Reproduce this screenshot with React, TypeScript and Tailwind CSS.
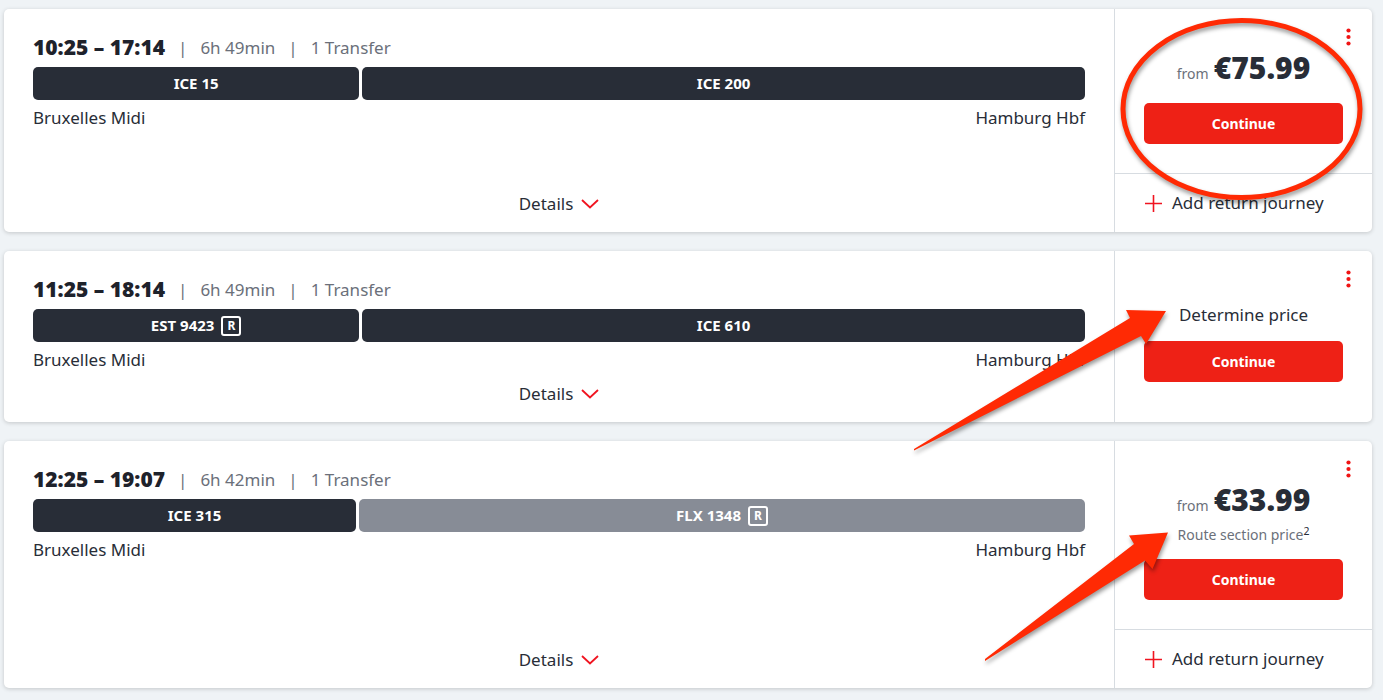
interface Section {
  label: string;
  seat?: boolean;
  muted?: boolean;
  // share of the travel time
  share: number;
}

interface Connection {
  id: string;
  times: string;
  duration: string;
  sections: Section[];
  price?: string;
  note?: string;
}

const connections: Connection[] = [
  {
    id: 'c1',
    times: '10:25 – 17:14',
    duration: '6h 49min',
    sections: [
      { label: 'ICE 15', share: 311 },
      { label: 'ICE 200', share: 689 },
    ],
    price: '€75.99',
  },
  {
    id: 'c2',
    times: '11:25 – 18:14',
    duration: '6h 49min',
    sections: [
      { label: 'EST 9423', seat: true, share: 311 },
      { label: 'ICE 610', share: 689 },
    ],
  },
  {
    id: 'c3',
    times: '12:25 – 19:07',
    duration: '6h 42min',
    sections: [
      { label: 'ICE 315', share: 308 },
      { label: 'FLX 1348', seat: true, muted: true, share: 692 },
    ],
    price: '€33.99',
    note: 'Route section price',
  },
];

const SectionBar = ({ section }: { section: Section }) => (
  <div
    className={`flex h-[33px] min-w-0 items-center justify-center gap-[7px] rounded-[5px] text-[15px] font-bold text-white ${
      section.muted ? 'bg-[#878c96]' : 'bg-[#282d37]'
    }`}
    style={{ flex: `${section.share} 1 0` }}
  >
    <span>{section.label}</span>
    {section.seat && (
      <span className="flex h-5 w-5 items-center justify-center rounded-[3px] border-2 border-white text-xs">
        R
      </span>
    )}
  </div>
);

const Trip = ({ connection }: { connection: Connection }) => (
  <div className="flex min-w-0 flex-1 flex-col justify-between px-[29px] pt-6 pb-4">
    <div>
      <div className="mb-1 flex h-[30px] items-center gap-[13px] text-[17px] text-[#6b707a]">
        <h2 className="text-[21px] font-black text-[#1e222b]">{connection.times}</h2>
        <span>|</span>
        <span>{connection.duration}</span>
        <span>|</span>
        <span>1 Transfer</span>
      </div>
      <div className="flex gap-[3px]">
        {connection.sections.map((section) => (
          <SectionBar key={section.label} section={section} />
        ))}
      </div>
      <div className="mt-[6px] flex justify-between text-[17px] leading-6">
        <span>Bruxelles Midi</span>
        <span>Hamburg Hbf</span>
      </div>
    </div>
    <button type="button" className="flex items-center gap-2 self-center text-[17px] leading-6">
      Details
      <svg width="18" height="10" viewBox="0 0 18 10" fill="none" stroke="#f01420" strokeWidth="1.8">
        <path d="M1 1l8 7.5L17 1" />
      </svg>
    </button>
  </div>
);

const Offer = ({ connection }: { connection: Connection }) => (
  <div className="relative flex w-[258px] shrink-0 flex-col border-l border-[#d7dce1]">
    <button type="button" aria-label="More options" className="absolute top-4 right-[18px] p-[2px]">
      <svg width="7" height="20" viewBox="0 0 7 20" fill="#f01414">
        <circle cx="3.5" cy="3.5" r="2.1" />
        <circle cx="3.5" cy="10" r="2.1" />
        <circle cx="3.5" cy="16.5" r="2.1" />
      </svg>
    </button>
    <div className={`px-[29px] text-center ${connection.price ? 'pt-10 pb-[29px]' : 'pt-[52px] pb-10'}`}>
      {connection.price ? (
        <p className="flex h-10 items-baseline justify-center gap-[5px] leading-[38px]">
          <span className="text-sm leading-[38px] text-[#6b707a]">from</span>
          <span className="text-[30px] leading-[38px] font-black text-[#282d37]">{connection.price}</span>
        </p>
      ) : (
        <p className="text-[17px] leading-6">Determine price</p>
      )}
      {connection.note && (
        <p className="mt-1 h-5 text-sm text-[#6b707a]">
          {connection.note}
          <sup className="text-[#282d37]">2</sup>
        </p>
      )}
      <button
        type="button"
        className="mt-[14px] block h-[41px] w-full rounded-[5px] bg-[#ee2116] text-sm font-bold text-white"
      >
        Continue
      </button>
    </div>
    {connection.price && (
      <button
        type="button"
        className="flex h-[59px] items-center gap-[10px] border-t border-[#d7dce1] px-[30px] text-[17px] leading-6"
      >
        <svg width="17" height="17" viewBox="0 0 17 17" stroke="#f01420" strokeWidth="1.6">
          <path d="M8.5 0v17M0 8.5h17" />
        </svg>
        Add return journey
      </button>
    )}
  </div>
);

/* Hand-drawn style marks over the price column */
const Annotations = () => (
  <svg
    className="pointer-events-none absolute top-0 right-0 h-[700px] w-[483px] drop-shadow-[1px_3px_2px_rgba(0,0,0,0.4)]"
    viewBox="900 0 483 700"
    fill="#ff2a04"
    aria-hidden="true"
  >
    <ellipse cx="1241.5" cy="109" rx="118.5" ry="88.5" fill="none" stroke="#ff2a04" strokeWidth="5" />
    <path d="M914 450.500L914 449L1130 318L1126 310L1166 311L1146 344L1141 336Z" />
    <path d="M985 661L985 659L1134 544L1129 535.500L1168 532.500L1152.500 569L1145 560.500Z" />
  </svg>
);

export default function App() {
  return (
    <main className="relative min-h-screen overflow-hidden bg-[#eff3f6] pt-[9px] pr-[11px] pb-3 pl-1 font-['Noto_Sans',sans-serif] text-[#282d37]">
      <div className="flex flex-col gap-[19px]">
        {connections.map((connection) => (
          <article key={connection.id} className="flex rounded-[5px] bg-white shadow-[0_1px_4px_rgba(0,0,0,0.18)]">
            <Trip connection={connection} />
            <Offer connection={connection} />
          </article>
        ))}
      </div>
      <Annotations />
    </main>
  );
}
